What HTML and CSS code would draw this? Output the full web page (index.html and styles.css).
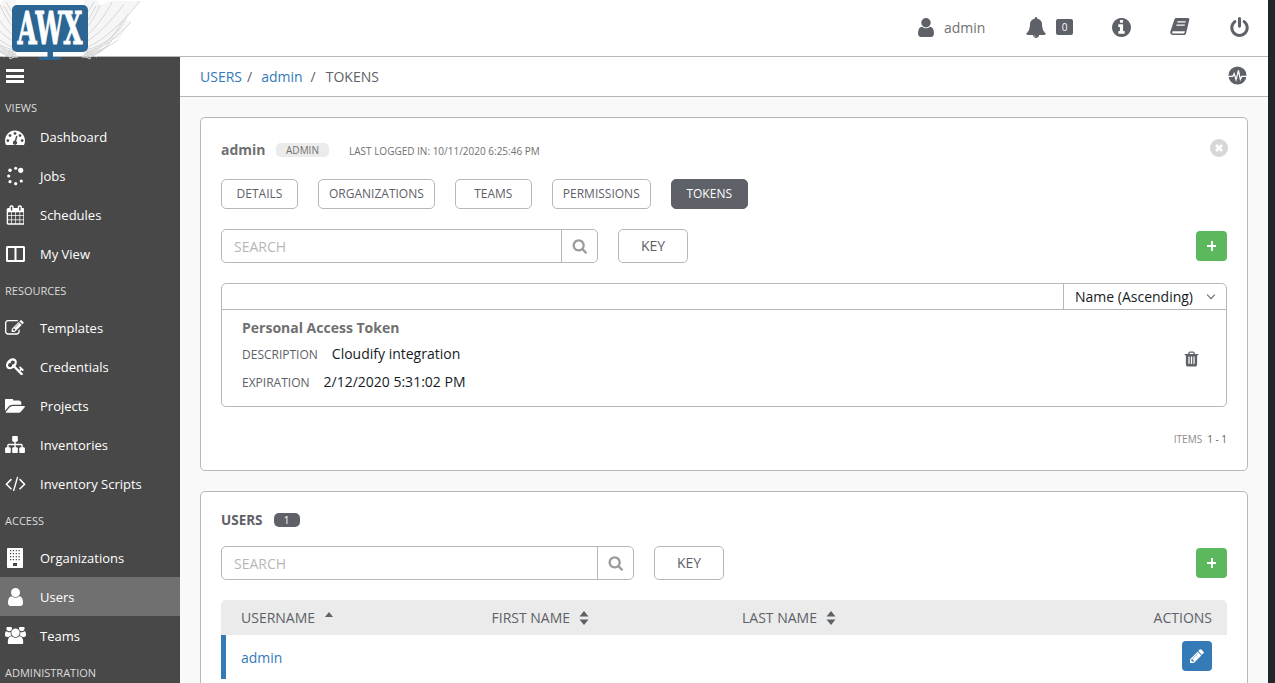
FILE: index.html
```html
<!DOCTYPE html>
<html lang="en">
<head>
<meta charset="utf-8">
<title>AWX - Tokens</title>
<link rel="stylesheet" href="styles.css">
</head>
<body>
<svg class="defs" aria-hidden="true">
  <symbol id="i-user" viewBox="256 128 1280 1536"><path d="M1536 1399q0 109-62.5 187t-150.5 78h-854q-88 0-150.5-78t-62.5-187q0-85 8.5-160.5t31.5-152 58.5-131 94-89 134.5-34.5q131 128 313 128t313-128q76 0 134.5 34.5t94 89 58.5 131 31.5 152 8.5 160.5zm-256-887q0 159-112.5 271.5t-271.5 112.5-271.5-112.5-112.5-271.5 112.5-271.5 271.5-112.5 271.5 112.5 112.5 271.5z"/></symbol>
  <symbol id="i-bell" viewBox="64 0 1664 1792"><path d="M912 1696q0-16-16-16-59 0-101.5-42.5t-42.5-101.5q0-16-16-16t-16 16q0 73 51.5 124.5t124.5 51.5q16 0 16-16zm816-288q0 52-38 90t-90 38h-448q0 106-75 181t-181 75-181-75-75-181h-448q-52 0-90-38t-38-90q50-42 91-88t85-119.5 74.5-158.5 50-206 19.5-260q0-152 117-282.5t307-158.5q-8-19-8-39 0-40 28-68t68-28 68 28 28 68q0 20-8 39 190 28 307 158.5t117 282.5q0 139 19.5 260t50 206 74.5 158.5 85 119.5 91 88z"/></symbol>
  <symbol id="i-info" viewBox="128 128 1536 1536"><path d="M1152 1376v-160q0-14-9-23t-23-9h-96v-512q0-14-9-23t-23-9h-320q-14 0-23 9t-9 23v160q0 14 9 23t23 9h96v320h-96q-14 0-23 9t-9 23v160q0 14 9 23t23 9h448q14 0 23-9t9-23zm-128-896v-160q0-14-9-23t-23-9h-192q-14 0-23 9t-9 23v160q0 14 9 23t23 9h192q14 0 23-9t9-23zm640 416q0 209-103 385.5t-279.5 279.5-385.5 103-385.5-103-279.5-279.5-103-385.5 103-385.5 279.5-279.5 385.5-103 385.5 103 279.5 279.5 103 385.5z"/></symbol>
  <symbol id="i-power" viewBox="128 0 1536 1664"><path d="M1664 896q0 156-61 298t-164 245-245 164-298 61-298-61-245-164-164-245-61-298q0-182 80.5-343t226.5-270q43-32 95.5-25t83.5 50q32 42 24.5 94.5t-49.5 84.5q-98 74-151.5 181t-53.5 228q0 104 40.5 198.5t109.5 163.5 163.5 109.5 198.5 40.5 198.5-40.5 163.5-109.5 109.5-163.5 40.5-198.5q0-121-53.5-228t-151.5-181q-42-32-49.5-84.5t24.5-94.5q31-43 84-50t95 25q146 109 226.5 270t80.5 343zm-640-768v640q0 52-38 90t-90 38-90-38-38-90v-640q0-52 38-90t90-38 90 38 38 90z"/></symbol>
  <symbol id="i-book" viewBox="0 0 20 20"><path d="M6 1h12c1 0 1.600.8 1.300 1.800l-3.200 13.400c-.3 1-1 1.800-2.200 1.800H3c-1.800 0-3-1.200-2.700-3.200.05-.5.2-1 .4-1.400L4.400 2.500C4.700 1.600 5.200 1 6 1zm1.500 3.300-.3 1.200h8.300l.3-1.200zm-.9 3.200-.3 1.200h8.300l.3-1.200zM3.400 14.200c-.7 0-1.200.5-1.200 1.200s.5 1.100 1.200 1.100h10.300c.3 0 .6-.2.7-.5l.5-1.800z" fill-rule="evenodd"/></symbol>
  <symbol id="i-search" viewBox="0 128 1728 1664"><path d="M1216 832q0-185-131.500-316.500t-316.500-131.500-316.500 131.500-131.500 316.500 131.500 316.500 316.500 131.500 316.500-131.500 131.500-316.500zm512 832q0 52-38 90t-90 38q-54 0-90-38l-343-342q-179 124-399 124-143 0-273.500-55.500t-225-150-150-225-55.500-273.500 55.500-273.500 150-225 225-150 273.500-55.500 273.500 55.500 225 150 150 225 55.500 273.500q0 220-124 399l343 343q37 37 37 90z"/></symbol>
  <symbol id="i-trash" viewBox="128 128 1536 1664"><path d="M704 1376v-704q0-14-9-23t-23-9h-64q-14 0-23 9t-9 23v704q0 14 9 23t23 9h64q14 0 23-9t9-23zm256 0v-704q0-14-9-23t-23-9h-64q-14 0-23 9t-9 23v704q0 14 9 23t23 9h64q14 0 23-9t9-23zm256 0v-704q0-14-9-23t-23-9h-64q-14 0-23 9t-9 23v704q0 14 9 23t23 9h64q14 0 23-9t9-23zm-544-992h448l-48-117q-7-9-17-11h-317q-10 2-17 11zm928 32v64q0 14-9 23t-23 9h-96v948q0 83-47 143.500t-113 60.500h-832q-66 0-113-58.500t-47-141.500v-952h-96q-14 0-23-9t-9-23v-64q0-14 9-23t23-9h309l70-167q15-37 54-63t79-26h320q40 0 79 26t54 63l70 167h309q14 0 23 9t9 23z"/></symbol>
  <symbol id="i-pencil" viewBox="128 128 1536 1536"><path d="M491 1536l91-91-235-235-91 91v107h128v128h107zm523-928q0-22-22-22-10 0-17 7l-542 542q-7 7-7 17 0 22 22 22 10 0 17-7l542-542q7-7 7-17zm-54-192l416 416-832 832h-416v-416zm683 96q0 53-37 90l-166 166-416-416 166-165q36-38 90-38 53 0 91 38l235 234q37 39 37 91z"/></symbol>
  <symbol id="i-dash" viewBox="0 128 1792 1408"><path d="M384 1152q0-53-37.500-90.500t-90.500-37.500-90.500 37.500-37.500 90.500 37.500 90.500 90.500 37.500 90.500-37.500 37.500-90.500zm192-448q0-53-37.500-90.500t-90.500-37.500-90.500 37.500-37.500 90.500 37.500 90.500 90.500 37.500 90.500-37.500 37.500-90.500zm428 481l101-382q6-26-7.500-48.500t-38.500-29.500-48 6.500-30 39.500l-101 382q-60 5-107 43.500t-63 98.500q-20 77 20 146t117 89 146-20 89-117q16-60-6-117t-72-91zm660-33q0-53-37.500-90.500t-90.500-37.500-90.500 37.500-37.500 90.500 37.500 90.500 90.500 37.500 90.500-37.500 37.500-90.500zm-640-640q0-53-37.500-90.500t-90.500-37.500-90.500 37.500-37.500 90.500 37.500 90.500 90.500 37.500 90.500-37.500 37.500-90.500zm448 192q0-53-37.500-90.500t-90.500-37.500-90.500 37.500-37.500 90.500 37.500 90.500 90.500 37.500 90.500-37.500 37.500-90.500zm320 448q0 261-141 483-19 29-54 29h-1402q-35 0-54-29-141-221-141-483 0-182 71-348t191-286 286-191 348-71 348 71 286 191 191 286 71 348z"/></symbol>
  <symbol id="i-spin" viewBox="0 0 20 20"><circle cx="15.700" cy="4.300" r="2.600"/><circle cx="10.700" cy="2.300" r="1.500"/><circle cx="5" cy="4.300" r="1.800"/><circle cx="3.700" cy="10" r="1.600"/><circle cx="5" cy="15.700" r="1.600"/><circle cx="10.700" cy="17.700" r="1.600"/><circle cx="16.300" cy="15" r="1.600"/></symbol>
  <symbol id="i-cal" viewBox="0 0 1664 1792"><path d="M192 1664h288v-288h-288v288zm352 0h320v-288h-320v288zm-352-352h288v-320h-288v320zm352 0h320v-320h-320v320zm-352-384h288v-288h-288v288zm736 736h320v-288h-320v288zm-384-736h320v-288h-320v288zm768 736h288v-288h-288v288zm-384-352h320v-320h-320v320zm-352-864v-288q0-13-9.500-22.500t-22.500-9.500h-64q-13 0-22.500 9.500t-9.500 22.500v288q0 13 9.500 22.500t22.500 9.500h64q13 0 22.500-9.500t9.500-22.500zm736 864h288v-320h-288v320zm-384-384h320v-288h-320v288zm384 0h288v-288h-288v288zm32-480v-288q0-13-9.500-22.500t-22.500-9.500h-64q-13 0-22.500 9.500t-9.500 22.500v288q0 13 9.500 22.500t22.500 9.500h64q13 0 22.500-9.500t9.500-22.500zm384-64v1280q0 52-38 90t-90 38h-1408q-52 0-90-38t-38-90v-1280q0-52 38-90t90-38h128v-96q0-66 47-113t113-47h64q66 0 113 47t47 113v96h384v-96q0-66 47-113t113-47h64q66 0 113 47t47 113v96h128q52 0 90 38t38 90z"/></symbol>
  <symbol id="i-cols" viewBox="0 0 19 16"><path fill-rule="evenodd" d="M1.500 0h16c.8 0 1.500.7 1.500 1.500v13c0 .8-.7 1.500-1.500 1.500h-16C.7 16 0 15.300 0 14.500v-13C0 .7.700 0 1.500 0zM2 2v12h6.500V2zm8.500 0v12H17V2z"/></symbol>
  <symbol id="i-edit" viewBox="0 128 1920 1536"><path d="M888 1184l116-116-152-152-116 116v56h96v96h56zm440-720q-16-16-33 1l-350 350q-17 17-1 33t33-1l350-350q17-17 1-33zm80 594v190q0 119-84.500 203.500t-203.500 84.500h-832q-119 0-203.500-84.500t-84.500-203.500v-832q0-119 84.500-203.500t203.500-84.500h832q63 0 117 25 15 7 18 23 3 17-9 29l-49 49q-14 14-32 8-23-6-45-6h-832q-66 0-113 47t-47 113v832q0 66 47 113t113 47h832q66 0 113-47t47-113v-126q0-13 9-22l64-64q15-15 35-7t20 29zm-96-738l288 288-672 672h-288v-288zm444 132l-92 92-288-288 92-92q28-28 68-28t68 28l152 152q28 28 28 68t-28 68z"/></symbol>
  <symbol id="i-key" viewBox="0 128 1792 1536"><path d="M832 512q0-80-56-136t-136-56-136 56-56 136q0 42 19 83-41-19-83-19-80 0-136 56t-56 136 56 136 136 56 136-56 56-136q0-42-19-83 41 19 83 19 80 0 136-56t56-136zm851 704q0 17-49 66t-66 49q-9 0-28.500-16t-36.500-33-38.500-40-24.500-26l-96 96 220 220q28 28 28 68 0 42-39 81t-81 39q-40 0-68-28l-671-671q-176 131-365 131-163 0-265.500-102.500t-102.500-265.500q0-160 95-313t248-248 313-95q163 0 265.500 102.500t102.500 265.500q0 189-131 365l355 355 96-96q-3-3-26-24.500t-40-38.500-33-36.500-16-28.500q0-17 49-66t66-49q13 0 23 10 6 6 46 44.500t82 79.500 86.500 86 73 78 28.500 41z"/></symbol>
  <symbol id="i-folder" viewBox="0 256 1879 1280"><path d="M1879 952q0 31-31 66l-336 396q-43 51-120.500 86.500t-143.500 35.500h-1088q-34 0-60.500-13t-26.500-43q0-31 31-66l336-396q43-51 120.500-86.500t143.500-35.500h1088q34 0 60.500 13t26.500 43zm-343-344v160h-832q-94 0-197 47.500t-164 119.500l-337 396-5 6q0-4-.5-12.500t-.5-12.500v-960q0-92 66-158t158-66h320q92 0 158 66t66 158v32h544q92 0 158 66t66 158z"/></symbol>
  <symbol id="i-site" viewBox="0 128 1792 1536"><path d="M1792 1248v320q0 40-28 68t-68 28h-320q-40 0-68-28t-28-68v-320q0-40 28-68t68-28h96v-192h-512v192h96q40 0 68 28t28 68v320q0 40-28 68t-68 28h-320q-40 0-68-28t-28-68v-320q0-40 28-68t68-28h96v-192h-512v192h96q40 0 68 28t28 68v320q0 40-28 68t-68 28h-320q-40 0-68-28t-28-68v-320q0-40 28-68t68-28h96v-192q0-52 38-90t90-38h512v-192h-96q-40 0-68-28t-28-68v-320q0-40 28-68t68-28h320q40 0 68 28t28 68v320q0 40-28 68t-68 28h-96v192h512q52 0 90 38t38 90v192h96q40 0 68 28t28 68z"/></symbol>
  <symbol id="i-code" viewBox="0 256 1920 1280"><path d="M617 1399l-50 50q-10 10-23 10t-23-10l-466-466q-10-10-10-23t10-23l466-466q10-10 23-10t23 10l50 50q10 10 10 23t-10 23l-393 393 393 393q10 10 10 23t-10 23zm591-1067l-373 1291q-4 13-15.500 19.500t-23.500 2.500l-62-17q-13-4-19.500-15.500t-2.500-24.500l373-1291q4-13 15.500-19.500t23.500-2.500l62 17q13 4 19.500 15.500t2.500 24.500zm657 651l-466 466q-10 10-23 10t-23-10l-50-50q-10-10-10-23t10-23l393-393-393-393q-10-10-10-23t10-23l50-50q10-10 23-10t23 10l466 466q10 10 10 23t-10 23z"/></symbol>
  <symbol id="i-org" viewBox="0 0 16 20"><path fill-rule="evenodd" d="M1 0h14c.6 0 1 .4 1 1v18c0 .6-.4 1-1 1H1c-.6 0-1-.4-1-1V1c0-.6.4-1 1-1zm2 2v1.200h1.200V2zm2.800 0v1.200H7V2zm2.900 0v1.200h1.200V2zm2.800 0v1.200h1.200V2zM3 5v1.200h1.200V5zm2.800 0v1.200H7V5zm2.900 0v1.200h1.200V5zm2.800 0v1.200h1.200V5zM3 8v1.200h1.200V8zm2.800 0v1.200H7V8zm2.900 0v1.200h1.200V8zm2.800 0v1.200h1.200V8zM3 11v1.200h1.200V11zm2.800 0v1.200H7V11zm2.900 0v1.200h1.200V11zm2.800 0v1.200h1.200V11zM6 15v3h4v-3z"/></symbol>
  <symbol id="i-users" viewBox="0 128 1920 1536"><path d="M593 896q-162 5-265 128h-134q-82 0-138-40.500t-56-118.500q0-353 124-353 6 0 43.500 21t97.500 42.500 119 21.500q67 0 133-23-5 37-5 66 0 139 81 256zm1071 637q0 120-73 189.500t-194 69.500h-874q-121 0-194-69.500t-73-189.500q0-53 3.500-103.500t14-109 26.500-108.500 43-97.500 62-81 85.500-53.500 111.500-20q10 0 43 21.500t73 48 107 48 135 21.500 135-21.500 107-48 73-48 43-21.500q61 0 111.500 20t85.500 53.500 62 81 43 97.500 26.500 108.500 14 109 3.500 103.500zm-1024-1277q0 106-75 181t-181 75-181-75-75-181 75-181 181-75 181 75 75 181zm704 384q0 159-112.500 271.500t-271.500 112.500-271.500-112.500-112.500-271.500 112.500-271.500 271.500-112.500 271.500 112.500 112.500 271.500zm576 225q0 78-56 118.500t-138 40.500h-134q-103-123-265-128 81-117 81-256 0-29-5-66 66 23 133 23 59 0 119-21.500t97.500-42.500 43.500-21q124 0 124 353zm-128-609q0 106-75 181t-181 75-181-75-75-181 75-181 181-75 181 75 75 181z"/></symbol>
  <symbol id="i-pulse" viewBox="0 0 20 20"><circle cx="10" cy="10" r="9.500"/><path class="pulse-line" d="M0 11h5l1.500-3 2 6.500L11 4.500l2 9.500 1.500-3H20"/></symbol>
  <symbol id="i-close" viewBox="0 0 18 18"><circle cx="9" cy="9" r="9"/><path class="close-line" d="M6 6l6 6M12 6l-6 6"/></symbol>
  <symbol id="i-sort" viewBox="0 0 10 14"><path d="M5 0l4.500 5.500h-9zM5 14L.5 8.500h9z"/></symbol>
</svg>

<div class="page">
  <header class="topbar">
    <svg class="logo" viewBox="0 0 140 62" role="img" aria-label="AWX">
      <g id="wing-r" class="wing">
        <path class="wing-fill" d="M84 0H97l3 5 12-4h28l-12 13-5 6 8 2-13 18-5-2-5 8-6-2-5 6-6-3-1 8H84z"/>
        <path class="wing-line" d="M86 48C105 40 125 20 140 1M86 42C102 32 115 16 124 4M86 36C96 28 106 14 112 2M86 28C92 22 97 12 100 5M86 50C104 46 120 34 128 14M86 52C102 48 114 38 123 20M86 53C102 50 118 36 131 22M84 54C98 52 110 46 118 40M84 55C96 54 106 50 113 38M82 56C92 56 100 52 108 46M82 57C90 58 98 54 103 50M86 57l4 2 1-6M92 55l5 2M88 20l8-14M88 12l6-10"/>
      </g>
      <use href="#wing-r" transform="matrix(-1 0 0 1 100 0)"/>
      <rect class="logo-stand" x="47.500" y="50" width="5.500" height="8"/>
      <rect class="logo-stand" x="39" y="57" width="22" height="3"/>
      <rect class="logo-screen" x="12" y="5" width="76" height="47" rx="5"/>
      <text class="logo-text" x="50" y="44" text-anchor="middle" textLength="65" lengthAdjust="spacingAndGlyphs">AWX</text>
    </svg>
    <nav class="top-actions">
      <svg class="top-icon user-icon"><use href="#i-user"/></svg>
      <span class="top-user">admin</span>
      <svg class="top-icon bell-icon"><use href="#i-bell"/></svg>
      <span class="top-count">0</span>
      <svg class="top-icon info-icon"><use href="#i-info"/></svg>
      <svg class="top-icon book-icon"><use href="#i-book"/></svg>
      <svg class="top-icon power-icon"><use href="#i-power"/></svg>
    </nav>
  </header>

  <div class="workspace">
    <aside class="sidebar">
      <div class="menu-row"><span class="burger"></span></div>
      <div class="side-heading first">VIEWS</div>
      <a class="side-item"><span class="side-ico"><svg class="ico-dash"><use href="#i-dash"/></svg></span>Dashboard</a>
      <a class="side-item"><span class="side-ico"><svg class="ico-spin"><use href="#i-spin"/></svg></span>Jobs</a>
      <a class="side-item"><span class="side-ico"><svg class="ico-cal"><use href="#i-cal"/></svg></span>Schedules</a>
      <a class="side-item"><span class="side-ico"><svg class="ico-cols"><use href="#i-cols"/></svg></span>My View</a>
      <div class="side-heading">RESOURCES</div>
      <a class="side-item"><span class="side-ico"><svg class="ico-edit"><use href="#i-edit"/></svg></span>Templates</a>
      <a class="side-item"><span class="side-ico"><svg class="ico-key"><use href="#i-key"/></svg></span>Credentials</a>
      <a class="side-item"><span class="side-ico"><svg class="ico-folder"><use href="#i-folder"/></svg></span>Projects</a>
      <a class="side-item"><span class="side-ico"><svg class="ico-site"><use href="#i-site"/></svg></span>Inventories</a>
      <a class="side-item"><span class="side-ico"><svg class="ico-code"><use href="#i-code"/></svg></span>Inventory Scripts</a>
      <div class="side-heading">ACCESS</div>
      <a class="side-item"><span class="side-ico"><svg class="ico-org"><use href="#i-org"/></svg></span>Organizations</a>
      <a class="side-item active"><span class="side-ico"><svg class="ico-user"><use href="#i-user"/></svg></span>Users</a>
      <a class="side-item"><span class="side-ico"><svg class="ico-users"><use href="#i-users"/></svg></span>Teams</a>
      <div class="side-heading">ADMINISTRATION</div>
    </aside>

    <main class="main">
      <div class="crumbs">
        <a class="crumb-link">USERS</a><span class="crumb-sep first-sep">/</span>
        <a class="crumb-link">admin</a><span class="crumb-sep">/</span>
        <span class="crumb-current">TOKENS</span>
        <svg class="pulse"><use href="#i-pulse"/></svg>
      </div>

      <div class="content">
        <section class="panel panel-detail">
          <div class="detail-head">
            <span class="detail-name">admin</span>
            <span class="role-badge">ADMIN</span>
            <span class="last-login">LAST LOGGED IN: 10/11/2020 6:25:46 PM</span>
            <svg class="close-ico"><use href="#i-close"/></svg>
          </div>
          <div class="tabs">
            <button class="tab">DETAILS</button>
            <button class="tab">ORGANIZATIONS</button>
            <button class="tab">TEAMS</button>
            <button class="tab">PERMISSIONS</button>
            <button class="tab selected">TOKENS</button>
          </div>
          <div class="search-row">
            <div class="search narrow">
              <span class="search-input">SEARCH</span>
              <span class="search-btn"><svg><use href="#i-search"/></svg></span>
            </div>
            <button class="key-btn">KEY</button>
            <button class="add-btn"></button>
          </div>
          <div class="token-list">
            <div class="token-toolbar">
              <div class="sort-select">Name (Ascending)<span class="chevron"></span></div>
            </div>
            <div class="token-row">
              <div class="token-info">
                <div class="token-name">Personal Access Token</div>
                <div class="token-line"><span class="token-label">DESCRIPTION</span><span class="token-value">Cloudify integration</span></div>
                <div class="token-line"><span class="token-label">EXPIRATION</span><span class="token-value">2/12/2020 5:31:02 PM</span></div>
              </div>
              <svg class="trash"><use href="#i-trash"/></svg>
            </div>
          </div>
          <div class="pager"><span class="pager-label">ITEMS</span><span class="pager-range">1 - 1</span></div>
        </section>

        <section class="panel panel-users">
          <div class="users-title">USERS<span class="count-badge">1</span></div>
          <div class="search-row">
            <div class="search wide">
              <span class="search-input">SEARCH</span>
              <span class="search-btn"><svg><use href="#i-search"/></svg></span>
            </div>
            <button class="key-btn">KEY</button>
            <button class="add-btn"></button>
          </div>
          <div class="table-head">
            <div class="col">USERNAME<span class="sort-up"></span></div>
            <div class="col">FIRST NAME<svg class="sort-ico"><use href="#i-sort"/></svg></div>
            <div class="col">LAST NAME<svg class="sort-ico"><use href="#i-sort"/></svg></div>
            <div class="col col-actions">ACTIONS</div>
          </div>
          <div class="table-row">
            <a class="user-link">admin</a>
            <button class="edit-btn"><svg><use href="#i-pencil"/></svg></button>
          </div>
        </section>
      </div>
    </main>
  </div>
</div>
<div class="scroll-strip"></div>
</body>
</html>
```
FILE: styles.css
```css
* { box-sizing: border-box; }
html, body { height: 683px; margin: 0; overflow: hidden; }
body { display: flex; font-family: "Open Sans", "Liberation Sans", sans-serif; color: #707070; background: #fff; }
.defs { display: none; }
svg { fill: currentColor; display: block; }
button { font-family: inherit; cursor: pointer; }

.page { width: 1268px; height: 683px; display: flex; flex-direction: column; }
.scroll-strip { width: 7px; background: #20262a; }

/* top bar */
.topbar { height: 57px; flex: none; border-bottom: 1px solid #b7b7b7; display: flex; justify-content: flex-end; align-items: center; position: relative; background: #fff; }
.logo { position: absolute; left: 0; top: 0; width: 140px; height: 62px; z-index: 3; overflow: hidden; }
.wing-fill { fill: #f6f6f6; }
.wing-line { fill: none; stroke: #d6d6d6; stroke-width: 1; }
.logo-screen, .logo-stand { fill: #2b6594; }
.logo-text { font-family: "DejaVu Serif", serif; font-weight: 700; font-size: 44px; fill: #fff; stroke: #fff; stroke-width: 1; }
.top-actions { display: flex; align-items: center; color: #5e6168; padding: 0 19px 2px 0; }
.top-icon { height: 19px; }
.user-icon { width: 16px; height: 19px; margin-right: 10px; }
.top-user { font-size: 14px; color: #707070; width: 41px; margin-right: 41px; }
.bell-icon { width: 20px; height: 21px; margin-right: 10px; }
.top-count { width: 17px; height: 16px; border-radius: 2px; background: #5e6168; color: #fff; font-size: 10px; line-height: 16px; text-align: center; margin-right: 39px; }
.info-icon { width: 19px; margin-right: 39px; }
.book-icon { width: 20px; height: 20px; margin-right: 40px; }
.power-icon { width: 19px; height: 20px; }

/* layout */
.workspace { flex: 1; display: flex; min-height: 0; }
.sidebar { width: 180px; flex: none; background: #484848; color: #fff; overflow: hidden; }
.menu-row { height: 39px; padding: 12px 0 0 6px; }
.burger { display: block; width: 18px; height: 14px; border-top: 3px solid #fff; border-bottom: 3px solid #fff; position: relative; }
.burger::after { content: ""; position: absolute; left: 0; right: 0; top: 2.500px; height: 3px; background: #fff; }
.side-heading { height: 35px; padding-top: 10px; padding-left: 5px; font-size: 11px; line-height: 15px; color: #dcdcdc; }
.side-heading.first { height: 21px; padding-top: 4px; }
.side-item { height: 39px; display: flex; align-items: center; font-size: 13px; color: #fff; }
.side-item.active { background: #707070; }
.side-ico { width: 40px; flex: none; display: flex; justify-content: center; padding-right: 10px; }
.ico-dash { width: 20px; height: 16px; }
.ico-spin { width: 20px; height: 20px; }
.ico-cal { width: 18px; height: 20px; }
.ico-cols { width: 19px; height: 16px; }
.ico-edit { width: 20px; height: 16px; }
.ico-key { width: 19px; height: 17px; }
.ico-folder { width: 20px; height: 14px; }
.ico-site { width: 20px; height: 17px; }
.ico-code { width: 21px; height: 15px; }
.ico-org { width: 16px; height: 20px; }
.ico-user { width: 15px; height: 18px; }
.ico-users { width: 21px; height: 17px; }

.main { flex: 1; min-width: 0; display: flex; flex-direction: column; background: #f9f9f9; }
.crumbs { height: 40px; flex: none; background: #fff; border-bottom: 1px solid #b7b7b7; display: flex; align-items: center; padding: 0 21px 0 20px; font-size: 14px; color: #5e6168; }
.crumb-link { color: #337ab7; }
.crumb-sep { margin: 0 10px 0 8px; }
.first-sep { margin: 0 9px 0 5px; }
.pulse { width: 19px; height: 19px; margin-left: auto; margin-top: -3px; color: #5e6168; }
.pulse-line { fill: none; stroke: #fff; stroke-width: 1.300; }

.content { padding: 20px; flex: 1; overflow: hidden; }
.panel { background: #fff; border: 1px solid #b7b7b7; border-radius: 5px; padding: 0 20px; }
.panel-detail { height: 354px; margin-bottom: 20px; }
.panel-users { height: 260px; }

/* detail panel */
.detail-head { height: 61px; display: flex; align-items: center; position: relative; padding-top: 2px; }
.detail-name { font-size: 14px; font-weight: 700; width: 45px; margin-right: 10px; color: #707070; }
.role-badge { width: 53px; height: 14px; border-radius: 5px; background: #ebebeb; font-size: 10px; line-height: 14px; text-align: center; color: #707070; margin-right: 20px; }
.last-login { font-size: 10px; color: #707070; margin-top: 2px; }
.close-ico { width: 18px; height: 18px; margin: -4px -1px 0 auto; color: #d7d7d7; }
.close-line { fill: none; stroke: #fff; stroke-width: 2.600; }
.tabs { display: flex; gap: 20px; margin-bottom: 20px; }
.tab { height: 30px; min-width: 77px; padding: 0 10px 2px; background: #fff; border: 1px solid #b7b7b7; border-radius: 5px; font-size: 12px; color: #5e6168; }
.tab.selected { background: #5e6168; border-color: #5e6168; color: #fff; }

.search-row { height: 34px; display: flex; align-items: center; margin-bottom: 20px; }
.search { height: 34px; display: flex; border: 1px solid #b7b7b7; border-radius: 5px; margin-right: 20px; }
.search.narrow { width: 377px; }
.search.wide { width: 413px; }
.search-input { flex: 1; padding-left: 12px; font-size: 14px; line-height: 34px; color: #b7b7b7; }
.search-btn { width: 36px; border-left: 1px solid #b7b7b7; display: flex; align-items: center; justify-content: center; color: #9b9b9b; }
.search-btn svg { width: 15px; height: 15px; }
.key-btn { width: 70px; height: 34px; padding: 0 0 2px; background: #fff; border: 1px solid #b7b7b7; border-radius: 5px; font-size: 14px; color: #5e6168; }
.add-btn { width: 31px; height: 30px; margin-left: auto; background: #5cb85c; border: 0; border-radius: 4px; position: relative; }
.add-btn::before, .add-btn::after { content: ""; position: absolute; background: #fff; }
.add-btn::before { left: 11px; right: 11px; top: 14px; height: 2px; }
.add-btn::after { top: 10px; bottom: 10px; left: 14.500px; width: 2px; }

.token-list { height: 124px; border: 1px solid #b7b7b7; border-radius: 5px; }
.token-toolbar { height: 26px; border-bottom: 1px solid #b7b7b7; display: flex; justify-content: flex-end; }
.sort-select { width: 163px; border-left: 1px solid #b7b7b7; padding-left: 11px; font-size: 14px; line-height: 25px; color: #161b1f; position: relative; }
.chevron { position: absolute; right: 12px; top: 8px; width: 6px; height: 6px; border-right: 1px solid #5e6168; border-bottom: 1px solid #5e6168; transform: rotate(45deg); }
.token-row { display: flex; align-items: center; padding: 8px 28px 0 20px; }
.token-info { flex: 1; }
.token-name { font-size: 14px; font-weight: 700; line-height: 20px; color: #707070; margin-bottom: 4px; }
.token-line { height: 28px; display: flex; align-items: baseline; line-height: 24px; }
.token-label { font-size: 12px; color: #5e6168; margin-right: 14px; }
.token-value { font-size: 14px; color: #161b1f; }
.trash { width: 15px; height: 17px; color: #5e6168; margin: 2px -1px 0 0; }
.pager { display: flex; justify-content: flex-end; align-items: center; gap: 5px; height: 64px; font-size: 10px; }
.pager-label { color: #8f8a85; }
.pager-range { color: #5e6168; }

/* users panel */
.users-title { height: 54px; padding-top: 19px; display: flex; align-items: flex-start; font-size: 13.500px; font-weight: 700; line-height: 19px; color: #5e6168; }
.count-badge { width: 26px; height: 14px; margin: 2px 0 0 11px; border-radius: 5px; background: #5e6168; color: #fff; font-size: 10px; font-weight: 400; line-height: 14px; text-align: center; }
.table-head { height: 35px; display: grid; grid-template-columns: 250.500px 250.500px 1fr 100px; align-items: center; padding: 0 15px 0 20px; background: #ebebeb; border-radius: 5px 5px 0 0; font-size: 14px; color: #5e6168; }
.col { display: flex; align-items: center; }
.col-actions { justify-content: flex-end; }
.sort-up { width: 0; height: 0; margin: -6px 0 0 10px; border-left: 4.500px solid transparent; border-right: 4.500px solid transparent; border-bottom: 5px solid #5e6168; }
.sort-ico { width: 10px; height: 14px; margin-left: 9px; }
.table-row { height: 44px; border-left: 5px solid #337ab7; display: flex; align-items: center; justify-content: space-between; padding: 0 15px; }
.user-link { font-size: 14px; color: #337ab7; }
.edit-btn { width: 30px; height: 30px; border: 0; border-radius: 4px; background: #337ab7; color: #fff; display: flex; align-items: center; justify-content: center; padding: 0; margin-top: -2px; }
.edit-btn svg { width: 14px; height: 14px; }
```
